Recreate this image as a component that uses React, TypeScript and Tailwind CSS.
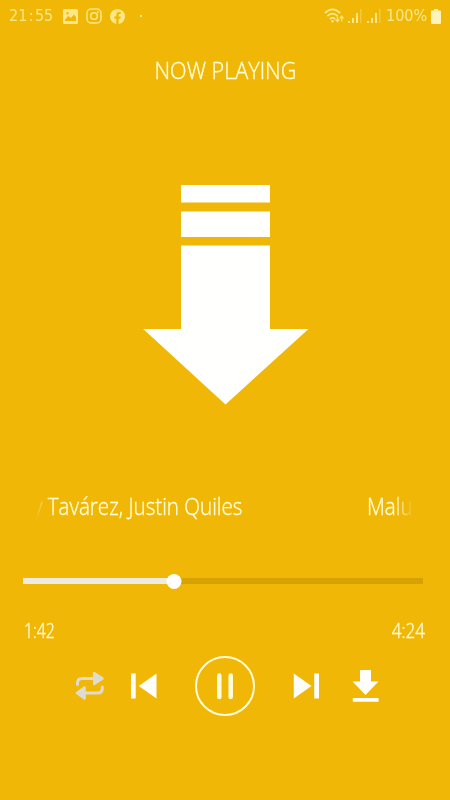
import type { ReactNode } from 'react'

interface LabelProps {
  children: ReactNode
  className?: string
}

function Label({ children, className = '' }: LabelProps) {
  return (
    <span
      className={`inline-block whitespace-pre font-['Open_Sans',sans-serif] font-light text-[#fffddc] [-webkit-text-stroke:0.35px_#fffddc] ${className}`}
    >
      {children}
    </span>
  )
}

function SignalIcon({ className = '' }: { className?: string }) {
  return (
    <svg width="14" height="15" viewBox="0 0 14 15" fill="currentColor" className={className}>
      <rect x="0" y="12" width="2" height="2" />
      <rect x="4" y="9" width="2" height="5" />
      <rect x="8" y="4" width="2" height="10" />
      <rect x="12" y="0" width="1.5" height="14" opacity="0.4" />
    </svg>
  )
}

function StatusBar() {
  return (
    <header className="flex h-8 items-center justify-between pr-[9px] pl-[9px] font-['DejaVu_Sans',sans-serif] text-[#fde788]">
      <div className="flex h-full items-center">
        <span className="flex w-[54px] origin-left scale-x-[.9] text-[16px] leading-8">
          21<span className="px-[1.5px]">:</span>55
        </span>
        <svg width="15" height="15" viewBox="0 0 15 15">
          <path
            fill="currentColor"
            fillRule="evenodd"
            d="M1.5 0h12A1.5 1.5 0 0 1 15 1.5v12a1.5 1.5 0 0 1-1.5 1.5h-12A1.5 1.5 0 0 1 0 13.5v-12A1.5 1.5 0 0 1 1.5 0ZM2 12h11V8l-2-2.5-3 3.5-3-2-3 4ZM4.5 3a1.2 1.2 0 1 0 0 2.4 1.2 1.2 0 0 0 0-2.4Z"
          />
        </svg>
        <svg width="16" height="16" viewBox="0 0 16 16" fill="none" stroke="currentColor" strokeWidth="1.5" className="ml-2">
          <rect x="1" y="1" width="14" height="14" rx="4" />
          <circle cx="8" cy="8" r="3.3" />
          <circle cx="12" cy="4" r="0.9" fill="currentColor" stroke="none" />
        </svg>
        <svg width="15" height="15" viewBox="0 0 24 24" fill="currentColor" className="ml-2">
          <path d="M24 12a12 12 0 1 0-14 11.85V15.5H7V12h3V9.4c0-3 1.8-4.7 4.5-4.7 1.3 0 2.7.25 2.7.25v2.9h-1.5c-1.5 0-1.9.9-1.9 1.85V12h3.3l-.55 3.5h-2.8v8.35A12 12 0 0 0 24 12Z" />
        </svg>
        <span className="ml-[15px] size-[2px] bg-current" />
      </div>
      <div className="flex h-full items-center">
        <svg width="21" height="16" viewBox="0 0 21 16" fill="none" stroke="currentColor" strokeWidth="1.7">
          <path d="M.8 5.2q7.7-7.6 15.4 0M3.4 8.2q5.1-5 10.2 0M5.9 11.1q2.6-2.4 5.2 0" />
          <circle cx="8.5" cy="13.3" r="1.2" fill="currentColor" stroke="none" />
          <path strokeWidth="1.2" d="M13.5 8.5v5M11.6 11.5l1.9 2.2 1.9-2.2M17.7 13.5v-5M15.8 10.4l1.9-2.2 1.9 2.2" />
        </svg>
        <SignalIcon className="ml-[3px]" />
        <SignalIcon className="ml-[5px]" />
        <span className="ml-[5px] w-[45px] origin-left scale-x-[.9] text-[16px] leading-8">100%</span>
        <svg width="10" height="15" viewBox="0 0 10 15" fill="#fff2bd">
          <path d="M3 0h4v1.5h2a1 1 0 0 1 1 1V14a1 1 0 0 1-1 1H1a1 1 0 0 1-1-1V2.5a1 1 0 0 1 1-1h2Z" />
        </svg>
      </div>
    </header>
  )
}

function Artwork() {
  return (
    <svg width="166" height="220" viewBox="0 0 166 220" fill="#fffffd" className="mt-[89px] ml-[143px]">
      <path d="M38 0h89v17.5H38ZM38 26.5h89V52H38ZM38 60.5h89v83.5h38.5L82.5 219.5.2 144H38Z" />
    </svg>
  )
}

function Marquee() {
  return (
    <div className="mx-[36px] mt-[79px] flex h-11 items-center overflow-hidden mask-[linear-gradient(to_right,transparent,black_16px,black_358px,transparent)]">
      <div className="flex w-[331px] shrink-0 items-center">
        <Label className="-ml-[3px] origin-left scale-x-[.895] text-[23px]">y Tavárez, Justin Quiles</Label>
      </div>
      <Label className="origin-left scale-x-[.9] text-[23px]">Malu</Label>
    </div>
  )
}

function SeekBar({ progress }: { progress: number }) {
  return (
    <div className="mt-[45px] mr-[27px] ml-[23px]">
      <div className="relative flex h-[16px] items-center">
        <div className="h-[6px] w-full bg-[#d6a303]">
          <div className="h-full bg-[#eeebe4]" style={{ width: `${progress}%` }} />
        </div>
        <div
          className="absolute size-[15px] -translate-x-1/2 rounded-full bg-white"
          style={{ left: `${progress}%` }}
        />
      </div>
    </div>
  )
}

function Controls() {
  return (
    <div className="mt-[13px] flex h-[60px] items-center pl-[75px]">
      <button aria-label="Repeat">
        <svg width="30" height="30" viewBox="0 0 30 30" fill="none" stroke="#dedbd0" strokeLinejoin="round">
          <path d="M2.500 13.500v-1.500q0-4.500 4.500-4.500H19M27.300 16v1.500q0 4.500-4.500 4.500H11" strokeWidth="3" strokeLinecap="round" />
          <path d="M19.200 2 27.500 7.500 19.200 13ZM9.500 16.500 2 22l7.500 5.500Z" fill="#dedbd0" strokeWidth="2.600" />
        </svg>
      </button>
      <button aria-label="Previous" className="ml-[26px]">
        <svg width="26" height="26" viewBox="0 0 26 26" fill="#fffef8">
          <path d="M0 .5h4.7v25H0ZM25.5.5v25L7.7 13Z" />
        </svg>
      </button>
      <button aria-label="Pause" className="ml-[38px]">
        <svg width="60" height="60" viewBox="0 0 60 60" fill="none" stroke="#fffddd">
          <circle cx="30" cy="30" r="29" strokeWidth="2" />
          <path d="M24.3 19.5V41M35.7 19.5V41" strokeWidth="4.5" strokeLinecap="round" />
        </svg>
      </button>
      <button aria-label="Next" className="ml-[38px]">
        <svg width="26" height="26" viewBox="0 0 26 26" fill="#fffef8">
          <path d="M.8.5v25L18.5 13ZM21.2.5H26v25h-4.8Z" />
        </svg>
      </button>
      <button aria-label="Download" className="ml-[33px]">
        <svg width="27" height="32" viewBox="0 0 27 32" fill="#fffefa">
          <path d="M8 0h11v11.5h7.5L13.5 25 .5 11.5H8ZM.8 28h25.8v3.7H.8Z" />
        </svg>
      </button>
    </div>
  )
}

export default function App() {
  return (
    <main className="flex h-[800px] w-[450px] flex-col overflow-hidden bg-[#f0b706]">
      <StatusBar />
      <h1 className="mt-[13px] mb-px flex h-[50px] items-center justify-center">
        <Label className="scale-x-[.94] text-[23px]">NOW PLAYING</Label>
      </h1>
      <Artwork />
      <Marquee />
      <SeekBar progress={37.8} />
      <div className="mt-[29px] flex h-[25px] items-center justify-between pr-[25px] pl-[24px]">
        <Label className="origin-left scale-x-[.79] text-[20px]">1:42</Label>
        <Label className="origin-right scale-x-[.85] text-[20px]">4:24</Label>
      </div>
      <Controls />
    </main>
  )
}
